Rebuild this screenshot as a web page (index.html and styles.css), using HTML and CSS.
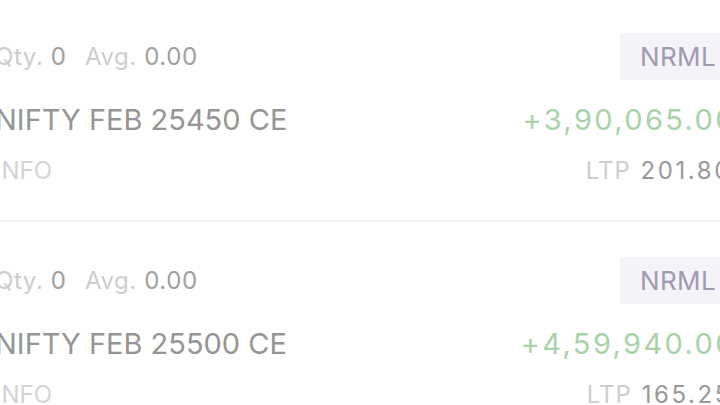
FILE: index.html
```html
<!DOCTYPE html>
<html lang="en">
<head>
  <meta charset="UTF-8" />
  <meta name="viewport" content="width=device-width, initial-scale=1" />
  <title>Positions</title>
  <link rel="stylesheet" href="styles.css">
</head>
<body>

  <div class="positions">

    <div class="position">
      <div class="line">
        <div class="qty">
          <span class="label">Qty.</span> <span class="value">0</span>
          <span class="label avg">Avg.</span> <span class="value">0.00</span>
        </div>
        <span class="badge">NRML</span>
      </div>
      <div class="line line-name">
        <div class="symbol">NIFTY FEB 25450 CE</div>
        <div class="pnl">+3,90,065.00</div>
      </div>
      <div class="line line-ltp">
        <div class="exchange">INFO</div>
        <div class="ltp"><span class="label">LTP</span> <span class="value">201.80</span></div>
      </div>
    </div>

    <div class="position">
      <div class="line">
        <div class="qty">
          <span class="label">Qty.</span> <span class="value">0</span>
          <span class="label avg">Avg.</span> <span class="value">0.00</span>
        </div>
        <span class="badge">NRML</span>
      </div>
      <div class="line line-name">
        <div class="symbol">NIFTY FEB 25500 CE</div>
        <div class="pnl">+4,59,940.00</div>
      </div>
      <div class="line line-ltp">
        <div class="exchange">INFO</div>
        <div class="ltp"><span class="label">LTP</span> <span class="value">165.25</span></div>
      </div>
    </div>

  </div>

</body>
</html>
```

FILE: styles.css
```css
body {
  font-family: Inter, "Liberation Sans", sans-serif;
  margin: 0;
  background: #fff;
  overflow: hidden;
}
.positions {
  margin: -2px -16px 0 -5px;
}
.position {
  padding: 35px 0;
  border-bottom: 2px solid #f2f2f2;
}
.line {
  display: flex;
  justify-content: space-between;
  align-items: center;
}
.line-name {
  margin-top: 21px;
  height: 36px;
}
.line-ltp {
  margin-top: 18px;
  height: 30px;
}
.qty {
  font-size: 24px;
  letter-spacing: 0.6px;
}
.label {
  color: #cdcdcd;
}
.value {
  color: #a0a0a0;
}
.avg {
  margin-left: 11px;
}
.badge {
  height: 47px;
  line-height: 47px;
  padding: 0 20px;
  background: #f5f3fa;
  color: #a09aaf;
  font-size: 26px;
  letter-spacing: 0.4px;
}
.symbol {
  font-size: 29px;
  color: #959595;
}
.pnl {
  font-size: 29px;
  color: #a8d3a8;
  letter-spacing: 2.4px;
}
.exchange {
  font-size: 24px;
  color: #d3d3d3;
}
.ltp {
  font-size: 24px;
  margin-right: 4px;
}
.ltp .label {
  letter-spacing: 1px;
}
.ltp .value {
  margin-left: 3px;
  color: #999;
  letter-spacing: 2.6px;
}
```
